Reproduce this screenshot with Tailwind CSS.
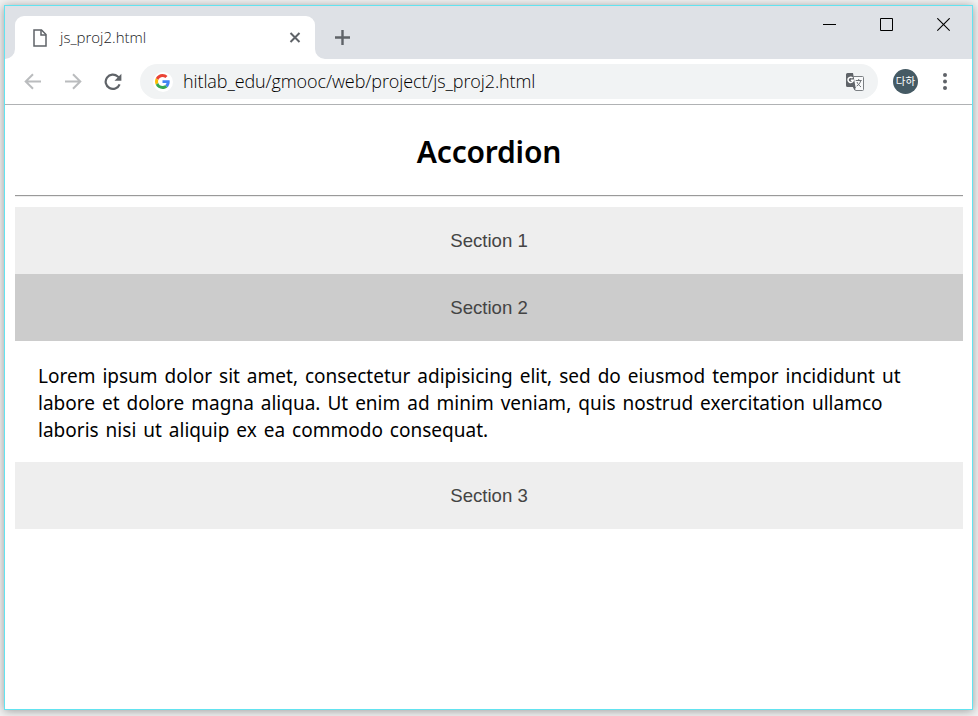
<!DOCTYPE html>
<html lang="en">
<head>
<meta charset="utf-8">
<title>js_proj2.html</title>
<script src="https://cdn.jsdelivr.net/npm/@tailwindcss/browser@4"></script>
</head>
<body class="h-[716px] w-[978px] overflow-hidden bg-[#f1f1f1] pt-[5px] pl-[4px]">
<div class="flex h-[705px] w-[969px] flex-col border border-[#62e3f0] bg-white shadow-[0_1px_9px_0px_rgba(0,0,0,0.35)]">
  <header class="flex h-[53px] shrink-0 items-end bg-[#dee1e6] font-['Open_Sans',sans-serif]">
    <svg class="h-[10px] w-[10px] shrink-0" viewBox="0 0 10 10"><path d="M10 0v10H0A10 10 0 0 0 10 0Z" fill="#fff"/></svg>
    <div class="flex h-[43px] w-[300px] shrink-0 items-center rounded-t-[9px] bg-white pl-[18px]">
      <svg class="h-[18px] w-[14px] shrink-0" viewBox="0 0 14 18" fill="none" stroke="#5f6368" stroke-width="1.5"><path d="M1 1h7.500L13 5.500V17H1Z"/><path d="M8 1v5h5"/></svg>
      <span class="ml-[13px] w-[217px] text-[15px] font-light whitespace-nowrap text-[#202124]">js_proj2.html</span>
      <svg class="ml-[12px] h-[11px] w-[12px] shrink-0" viewBox="0 0 12 11" stroke="#5f6368" stroke-width="2"><path d="M1.500 1l9 9M10.500 1l-9 9"/></svg>
    </div>
    <svg class="h-[10px] w-[10px] shrink-0" viewBox="0 0 10 10"><path d="M0 0v10h10A10 10 0 0 1 0 0Z" fill="#fff"/></svg>
    <svg class="mb-[14px] ml-[10px] h-[15px] w-[15px] shrink-0" viewBox="0 0 15 15" stroke="#5f6368" stroke-width="2.400"><path d="M7.500 0v15M0 7.500h15"/></svg>
    <div class="mb-[27px] ml-auto flex h-[14px] gap-[44px] pr-[22px]">
      <svg class="h-[14px] w-[13px]" viewBox="0 0 13 14"><path d="M0 6.500h13" stroke="#000"/></svg>
      <svg class="h-[14px] w-[13px]" viewBox="0 0 13 14" fill="none" stroke="#000"><path d="M.5 .5h12v12H.5Z"/></svg>
      <svg class="h-[14px] w-[13px]" viewBox="0 0 13 14" stroke="#000" stroke-width="1.200"><path d="M.3 .3l12.400 12.400M12.700 .3L.3 12.700"/></svg>
    </div>
  </header>
  <nav class="flex h-[46px] shrink-0 items-center border-b border-[#b0b2b4] pl-[19px] font-['Open_Sans',sans-serif]">
    <svg class="h-[18px] w-[18px] shrink-0" viewBox="0 0 18 18" fill="none" stroke="#babcbe" stroke-width="2"><path d="M17 8.500H2M9 1.200L1.700 8.500 9 15.800"/></svg>
    <svg class="ml-[22px] h-[18px] w-[18px] shrink-0" viewBox="0 0 18 18" fill="none" stroke="#babcbe" stroke-width="2"><path d="M1 8.500h15M9 1.200l7.300 7.300L9 15.800"/></svg>
    <svg class="ml-[22px] h-[18px] w-[18px] shrink-0" viewBox="0 0 18 18"><path d="M15.600 11.300A7.200 7.200 0 1 1 13.800 3.500L15.500 5" fill="none" stroke="#5f6368" stroke-width="2.200"/><path d="M17.400 .8V7.700H10.500Z" fill="#5f6368"/></svg>
    <div class="ml-[18px] flex h-[35px] w-[738px] shrink-0 items-center rounded-full bg-[#f1f3f4] pl-[13px]">
      <span class="flex h-[20px] w-[20px] shrink-0 items-center justify-center rounded-full bg-white">
        <svg class="-ml-[1px] h-[15px] w-[15px]" viewBox="0 0 48 48"><path fill="#ea4335" d="M24 9.500c3.540 0 6.710 1.220 9.210 3.600l6.850-6.850C35.900 2.380 30.470 0 24 0 14.620 0 6.510 5.380 2.560 13.220l7.980 6.190C12.430 13.720 17.740 9.500 24 9.500z"/><path fill="#4285f4" d="M46.980 24.550c0-1.570-.15-3.090-.38-4.550H24v9.020h12.940c-.58 2.960-2.260 5.480-4.780 7.180l7.730 6c4.510-4.180 7.090-10.360 7.090-17.650z"/><path fill="#fbbc05" d="M10.530 28.590c-.48-1.450-.76-2.990-.76-4.590s.27-3.140.76-4.590l-7.980-6.190C.92 16.460 0 20.120 0 24s.92 7.540 2.560 10.780l7.970-6.190z"/><path fill="#34a853" d="M24 48c6.480 0 11.930-2.130 15.890-5.810l-7.730-6c-2.150 1.450-4.920 2.300-8.160 2.300-6.260 0-11.570-4.220-13.470-9.910l-7.980 6.190C6.510 42.620 14.620 48 24 48z"/></svg>
      </span>
      <span class="ml-[10px] text-[18px] font-light tracking-[-0.11px] whitespace-nowrap text-black">hitlab_edu/gmooc/web/project/js_proj2.html</span>
      <svg class="mr-[14px] ml-auto h-[18px] w-[18px] shrink-0" viewBox="0 0 18 18"><path d="M7.500 3.500h9a1 1 0 0 1 1 1v12a1 1 0 0 1-1 1H9.500L7 13" fill="#f8f9fa" stroke="#7b7f83"/><path d="M1.500 0H7l2.500 14h-8A1.500 1.500 0 0 1 0 12.500v-11A1.500 1.500 0 0 1 1.500 0ZM7 14h3l-1.500 3.500Z" fill="#5f6368"/><path d="M6.600 5.100A2.600 2.600 0 1 0 7.200 7.300H4.800" fill="none" stroke="#fff" stroke-width="1.500"/><path d="M9.700 7.500h6M12.700 6v1.500M14.700 7.500c-.4 2.500-2 4.500-4 5.500M11 9c.7 2 2.300 3.500 4 5" fill="none" stroke="#6b6f73"/></svg>
    </div>
    <span class="ml-[15px] flex h-[25px] w-[25px] shrink-0 items-center justify-center rounded-full bg-[#455a64] font-['Noto_Sans_CJK_KR',sans-serif] text-[10.500px] leading-none text-white">다하</span>
    <svg class="ml-[25px] h-[17px] w-[4px] shrink-0" viewBox="0 0 4 17" fill="#5f6368"><circle cx="2" cy="2" r="2"/><circle cx="2" cy="8.500" r="2"/><circle cx="2" cy="15" r="2"/></svg>
  </nav>
  <main class="flex flex-col pr-[9px] pl-[10px]">
    <h1 class="mt-[23px] h-[48px] text-center font-['Noto_Sans',sans-serif] text-[30px] leading-[48px] font-semibold tracking-[-0.2px] text-black">Accordion</h1>
    <hr class="mt-[19px] h-[2px] border-t border-b border-t-[#9a9a9a] border-b-[#eeeeee]">
    <button class="mt-[10px] h-[67px] bg-[#eeeeee] pt-px font-['Liberation_Sans',sans-serif] text-[18.600px] text-[#444444]">Section 1</button>
    <button class="h-[67px] bg-[#cccccc] pt-px font-['Liberation_Sans',sans-serif] text-[18.600px] text-[#444444]">Section 2</button>
    <p class="h-[121px] pt-[22px] pl-[23px] font-['Noto_Sans',sans-serif] text-[19px] leading-[27px] [word-spacing:2px] whitespace-nowrap text-black">
      <span class="block tracking-[0.01px]">Lorem ipsum dolor sit amet, consectetur adipisicing elit, sed do eiusmod tempor incididunt ut</span>
      <span class="block tracking-[0.01px]">labore et dolore magna aliqua. Ut enim ad minim veniam, quis nostrud exercitation ullamco</span>
      <span class="block tracking-[0.01px]">laboris nisi ut aliquip ex ea commodo consequat.</span>
    </p>
    <button class="h-[67px] bg-[#eeeeee] pt-px font-['Liberation_Sans',sans-serif] text-[18.600px] text-[#444444]">Section 3</button>
  </main>
</div>
</body>
</html>
